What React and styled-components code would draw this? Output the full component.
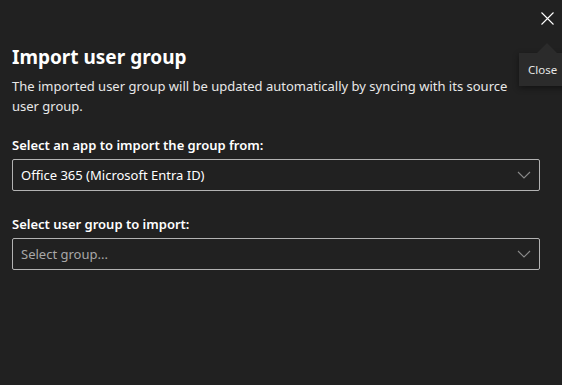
import styled, { createGlobalStyle } from "styled-components";

const GlobalStyle = createGlobalStyle`
  html, body {
    margin: 0;
    padding: 0;
    background: #212121;
  }
  body {
    font-family: "Noto Sans", "Open Sans", sans-serif;
    color: #ffffff;
  }
`;

const Dialog = styled.div`
  position: relative;
  width: 562px;
  height: 385px;
  box-sizing: border-box;
  padding: 43px 22px 0 12px;
  background: #212121;
`;

const CloseButton = styled.button`
  position: absolute;
  top: 10px;
  right: 7px;
  width: 16px;
  height: 16px;
  padding: 0;
  border: 0;
  background: none;
  display: flex;
  align-items: center;
  justify-content: center;
  cursor: pointer;
`;

const Tooltip = styled.div`
  position: absolute;
  top: 53px;
  left: 519px;
  width: 50px;
  height: 33px;
  box-sizing: border-box;
  padding-left: 9px;
  display: flex;
  align-items: center;
  background: #2b2b2b;
  color: #e6e6e6;
  font-size: 11.5px;
  box-shadow: 0 2px 6px rgba(0, 0, 0, 0.45);
  &::before {
    content: "";
    position: absolute;
    top: -10px;
    left: 18px;
    border: 10px solid transparent;
    border-top: 0;
    border-bottom-color: #2b2b2b;
    width: 0;
    height: 0;
  }
`;

const Title = styled.h2`
  margin: 0;
  font-size: 19px;
  font-weight: 700;
  line-height: 28px;
  color: #ffffff;
`;

const Description = styled.p`
  max-width: 512px;
  margin: 5px 0 0;
  font-size: 13px;
  line-height: 20px;
  color: #e8e8e8;
`;

const Field = styled.div`
  display: flex;
  flex-direction: column;
  gap: 5px;
  margin-top: ${(p) => p.$top}px;
`;

const Label = styled.label`
  font-size: 13px;
  font-weight: 600;
  line-height: 18px;
  color: #ffffff;
`;

const SelectBox = styled.div`
  height: 32px;
  box-sizing: border-box;
  border: 1px solid #b3b3b3;
  border-radius: 2px;
  padding: 0 8px 0 8px;
  display: flex;
  align-items: center;
  justify-content: space-between;
  font-size: 13px;
  color: ${(p) => (p.$placeholder ? "#a8a8a8" : "#ffffff")};
`;

const Chevron = () => (
  <svg width="14" height="8" viewBox="0 0 14 8" fill="none">
    <path d="M1 1l6 6 6-6" stroke="#8a8a8a" strokeWidth="1.1" />
  </svg>
);

const App = () => {
  return (
    <>
      <GlobalStyle />
      <Dialog>
        <CloseButton aria-label="Close">
          <svg width="13" height="13" viewBox="0 0 13 13">
            <path d="M0.5 0.5l12 12M12.5 0.5l-12 12" stroke="#ffffff" strokeWidth="1.1" />
          </svg>
        </CloseButton>
        <Tooltip>Close</Tooltip>
        <Title>Import user group</Title>
        <Description>
          The imported user group will be updated automatically by syncing with its source
          user group.
        </Description>
        <Field $top={20}>
          <Label>Select an app to import the group from:</Label>
          <SelectBox>
            Office 365 (Microsoft Entra ID)
            <Chevron />
          </SelectBox>
        </Field>
        <Field $top={24}>
          <Label>Select user group to import:</Label>
          <SelectBox $placeholder>
            Select group...
            <Chevron />
          </SelectBox>
        </Field>
      </Dialog>
    </>
  );
};

export default App;
